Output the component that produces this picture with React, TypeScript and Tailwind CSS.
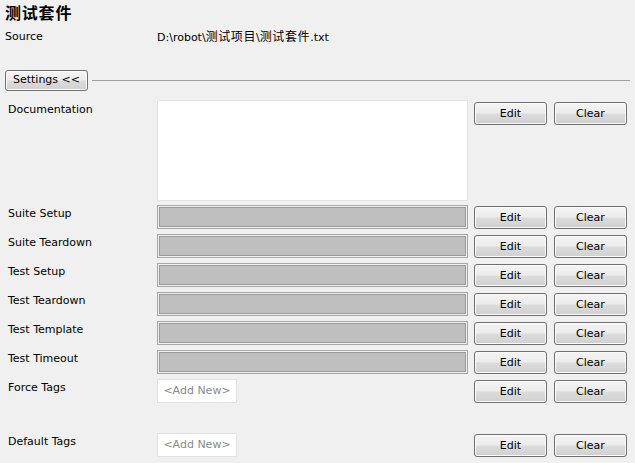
import React from "react"

const font = { fontFamily: "'DejaVu Sans', 'Noto Sans CJK SC', sans-serif" }

const btnBg =
	"bg-[linear-gradient(to_bottom,#f4f4f4_0%,#ececec_48%,#dcdcdc_52%,#d0d0d0_100%)]"

const Btn = ({ label }: { label: string }) => (
	<button
		className={`flex h-[23px] w-[73px] items-center justify-center rounded-[3px] border border-[#707070] ${btnBg} text-[11px] text-black shadow-[inset_0_0_0_1px_#fbfbfb]`}>
		{label}
	</button>
)

const Buttons = ({ className = "" }: { className?: string }) => (
	<div className={`ml-[6px] flex gap-[7px] ${className}`}>
		<Btn label="Edit" />
		<Btn label="Clear" />
	</div>
)

const Field = () => (
	<div className="h-[24px] w-[311px] border border-[#a6a6a6] p-px">
		<div className="h-full w-full border border-[#9a9a9a] bg-[#bfbfbf]" />
	</div>
)

const rows = ["Suite Setup", "Suite Teardown", "Test Setup", "Test Teardown", "Test Template", "Test Timeout"]

const AddNew = () => (
	<div className="flex h-[24px] w-[80px] items-center justify-center border border-[#e2e2e2] bg-white text-[11px] text-[#8a8a8a]">
		&lt;Add New&gt;
	</div>
)

const Cjk = ({ children }: { children: string }) => (
	<span className="text-[12px] tracking-[0.6px]">{children}</span>
)

export default function App() {
	return (
		<div className="h-[463px] w-[635px] overflow-hidden bg-[#f0f0f0] text-black" style={font}>
			<div
				className="px-[5px] pt-[2px] text-[16px] font-bold leading-[20px] tracking-[0.8px]"
				style={{ fontFamily: "'Noto Sans CJK SC', sans-serif" }}>
				测试套件
			</div>
			<div className="mt-[8px] flex h-[14px] items-center text-[11px] leading-[14px]">
				<span className="w-[157px] pl-[5px]">Source</span>
				<span>
					D:\robot\<Cjk>测试项目</Cjk>\<Cjk>测试套件</Cjk>.txt
				</span>
			</div>
			<div className="mt-[26px] flex items-center pl-[5px] pr-[5px]">
				<button
					className={`flex h-[21px] w-[83px] items-center justify-center rounded-[3px] border border-[#707070] ${btnBg} text-[11px] shadow-[inset_0_0_0_1px_#fbfbfb]`}>
					Settings &lt;&lt;
				</button>
				<div className="ml-[4px] h-px flex-1 bg-[#a0a0a0]" />
			</div>
			<div className="mt-[9px] flex flex-col text-[11px] leading-[14px]">
				<div className="flex h-[105px] items-start">
					<span className="mt-[3px] w-[157px] pl-[8px]">Documentation</span>
					<div className="h-[101px] w-[311px] border border-[#e4e4e4] bg-white" />
					<Buttons className="mt-[2px]" />
				</div>
				{rows.map((r) => (
					<div key={r} className="flex h-[29px] items-start">
						<span className="mt-[2px] w-[157px] pl-[8px]">{r}</span>
						<Field />
						<Buttons className="mt-px" />
					</div>
				))}
				<div className="flex h-[54px] items-start">
					<span className="mt-[2px] w-[157px] pl-[8px]">Force Tags</span>
					<AddNew />
					<Buttons className="ml-[237px] mt-px" />
				</div>
				<div className="flex h-[29px] items-start">
					<span className="mt-[2px] w-[157px] pl-[8px]">Default Tags</span>
					<AddNew />
					<Buttons className="ml-[237px] mt-px" />
				</div>
			</div>
		</div>
	)
}
